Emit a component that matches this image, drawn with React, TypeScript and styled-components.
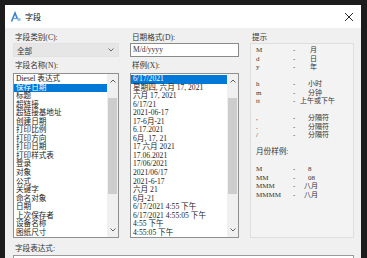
import styled, { createGlobalStyle } from 'styled-components';

const GlobalStyle = createGlobalStyle`
  html, body { margin: 0; padding: 0; background: #1c1c1c; }
  body { width: 367px; height: 258px; overflow: hidden; }
  * { box-sizing: border-box; }
`;

const fieldNames = [
  'Diesel 表达式', '保存日期', '标题', '超链接', '超链接基地址', '创建日期', '打印比例',
  '打印方向', '打印日期', '打印样式表', '登录', '对象', '公式', '关键字', '命名对象',
  '日期', '上次保存者', '设备名称', '图纸尺寸',
];

const samples = [
  '6/17/2021', '星期四, 六月 17, 2021', '六月 17, 2021', '6/17/21', '2021-06-17',
  '17-6月-21', '6.17.2021', '6月, 17, 21', '17 六月 2021', '17.06.2021', '17/06/2021',
  '2021/06/17', '2021-6-17', '六月 21', '6月-21', '6/17/2021 4:55 下午',
  '6/17/2021 4:55:05 下午', '4:55 下午', '4:55:05 下午',
];

type Hint = { key?: string; value?: string; shift?: number; caption?: string };

const hints: Hint[] = [
  { key: 'M', value: '月', shift: 2 },
  { key: 'd', value: '日', shift: 2 },
  { key: 'y', value: '年', shift: 2 },
  {},
  { key: 'h', value: '小时' },
  { key: 'm', value: '分钟' },
  { key: 'tt', value: '上午或下午', shift: -8 },
  {},
  { key: ',', value: '分隔符' },
  { key: '.', value: '分隔符' },
  { key: '/', value: '分隔符' },
  {},
  { caption: '月份样例:' },
  {},
  { key: 'M', value: '8' },
  { key: 'MM', value: '08' },
  { key: 'MMM', value: '八月', shift: -4 },
  { key: 'MMMM', value: '八月', shift: -4 },
];

export default function App() {
  return (
    <Screen>
      <GlobalStyle />
      <Dialog>
        <TitleBar>
          <AppIcon width="12" height="12" viewBox="0 0 12 12">
            <path d="M1.5 10.5 L5 2 L7.5 8" stroke="#3b82c8" strokeWidth="1.6" fill="none" />
            <path d="M3 7.5 H7" stroke="#6aa6dc" strokeWidth="1.2" />
            <circle cx="9" cy="8.5" r="1.8" fill="#9cc3e6" />
          </AppIcon>
          <Title>字段</Title>
          <Close width="10" height="10" viewBox="0 0 10 10">
            <path d="M1 1 L9 9 M9 1 L1 9" stroke="#2b2b2b" strokeWidth="1" />
          </Close>
        </TitleBar>

        <Body>
          <Column>
            <Label>字段类别(C):</Label>
            <Select>
              <span>全部</span>
              <Chevron width="6" height="4" viewBox="0 0 6 4">
                <path d="M0.5 0.5 L3 3 L5.5 0.5" stroke="#666" fill="none" />
              </Chevron>
            </Select>
            <Label $top={4}>字段名称(N):</Label>
            <ListBox>
              <Items>
                {fieldNames.map((n, i) => (
                  <Item key={n} $selected={i === 1}>{n}</Item>
                ))}
              </Items>
              <ScrollBar />
            </ListBox>
          </Column>

          <Column>
            <Label>日期格式(D):</Label>
            <TextInput>M/d/yyyy</TextInput>
            <Label $top={4}>样例(X):</Label>
            <ListBox>
              <Items>
                {samples.map((s, i) => (
                  <Item key={s} $selected={i === 0}>{s}</Item>
                ))}
              </Items>
              <ScrollBar />
            </ListBox>
          </Column>

          <Column>
            <HintLabel>提示</HintLabel>
            <HintBox>
              {hints.map((h, i) =>
                h.caption ? (
                  <HintCaption key={i}>{h.caption}</HintCaption>
                ) : (
                  <HintRow key={i}>
                    <span>{h.key}</span>
                    <span>{h.key ? '-' : ''}</span>
                    <HintValue $shift={h.shift ?? 0}>{h.value}</HintValue>
                  </HintRow>
                )
              )}
            </HintBox>
          </Column>

          <Expression>
            <Label $top={6}>字段表达式:</Label>
            <ExprBox />
          </Expression>
        </Body>
      </Dialog>
    </Screen>
  );
}

function ScrollBar() {
  return (
    <Scroll>
      <Arrow width="6" height="4" viewBox="0 0 6 4">
        <path d="M0.5 3.5 L3 1 L5.5 3.5" stroke="#606060" fill="none" />
      </Arrow>
      <Thumb />
      <Track />
      <Arrow width="6" height="4" viewBox="0 0 6 4">
        <path d="M0.5 0.5 L3 3 L5.5 0.5" stroke="#606060" fill="none" />
      </Arrow>
    </Scroll>
  );
}

const Screen = styled.div`
  width: 367px;
  height: 258px;
  padding: 5px 6px 0 5px;
`;

const Dialog = styled.div`
  height: 100%;
  background: #f0f0f0;
  font-family: 'Liberation Serif', 'Noto Sans CJK SC', serif;
  color: #1e1e1e;
`;

const TitleBar = styled.div`
  height: 23px;
  background: #fff;
  display: flex;
  align-items: center;
  padding: 0 7px 0 5px;
  gap: 3px;
`;

const AppIcon = styled.svg`
  flex: none;
`;

const Title = styled.div`
  flex: 1;
  font-size: 8px;
  font-family: 'Noto Sans CJK SC', sans-serif;
  color: #111;
`;

const Close = styled.svg`
  flex: none;
`;

const Body = styled.div`
  display: grid;
  grid-template-columns: 106px 109px 104px;
  column-gap: 11px;
  padding: 5px 0 0 8px;
`;

const Column = styled.div`
  display: flex;
  flex-direction: column;
`;

const Label = styled.div<{ $top?: number }>`
  height: 10px;
  line-height: 10px;
  margin-top: ${p => p.$top ?? 0}px;
  padding-left: 2px;
  font-size: 7.6px;
  color: #333;
  white-space: nowrap;
`;

const Select = styled.div`
  height: 14px;
  background: #e6e6e6;
  border: 1px solid #e2e2e2;
  display: flex;
  align-items: center;
  justify-content: space-between;
  padding: 0 4px 0 3px;
  font-size: 7.6px;
  color: #333;
`;

const Chevron = styled.svg`
  flex: none;
`;

const TextInput = styled.div`
  height: 14px;
  background: #fff;
  border: 1px solid #8a8a8a;
  padding-left: 2px;
  font-size: 7.6px;
  line-height: 12px;
  color: #333;
`;

const ListBox = styled.div`
  margin-top: 2px;
  height: 165px;
  border: 1px solid #8f8f8f;
  background: #fff;
  display: flex;
`;

const Items = styled.ul`
  flex: 1;
  margin: 0;
  padding: 1px 0 0;
  list-style: none;
  overflow: hidden;
  min-width: 0;
`;

const Item = styled.li<{ $selected?: boolean }>`
  height: 8.55px;
  line-height: 8.55px;
  padding-left: 2px;
  font-size: 7.6px;
  white-space: nowrap;
  background: ${p => (p.$selected ? '#0078d7' : 'transparent')};
  color: ${p => (p.$selected ? '#fff' : '#222')};
`;

const Scroll = styled.div`
  width: 11px;
  flex: none;
  background: #f0f0f0;
  display: flex;
  flex-direction: column;
  align-items: center;
  padding: 3px 0;
`;

const Arrow = styled.svg`
  flex: none;
  margin: 2px 0;
`;

const Thumb = styled.div`
  width: 9px;
  height: 96px;
  margin-top: 13px;
  background: #cdcdcd;
`;

const Track = styled.div`
  flex: 1;
`;

const HintLabel = styled.div`
  height: 10px;
  line-height: 10px;
  padding-left: 2px;
  font-size: 7.6px;
  color: #333;
`;

const HintBox = styled.div`
  height: 195px;
  border: 1px solid #dedede;
  background: #f3f3f3;
  padding: 2px 0 0 5px;
`;

const HintRow = styled.div`
  display: grid;
  grid-template-columns: 37px 15px auto;
  height: 8.5px;
  line-height: 8.5px;
  font-size: 7px;
  color: #333;
  white-space: nowrap;
`;

const HintValue = styled.span<{ $shift: number }>`
  margin-left: ${p => p.$shift}px;
`;

const HintCaption = styled.div`
  height: 8.5px;
  line-height: 8.5px;
  font-size: 7.6px;
  color: #333;
`;

const Expression = styled.div`
  grid-column: 1 / -1;
  display: flex;
  flex-direction: column;
`;

const ExprBox = styled.div`
  margin-top: 1px;
  height: 14px;
  width: 341px;
  background: #fff;
  border: 1px solid #9a9a9a;
`;
